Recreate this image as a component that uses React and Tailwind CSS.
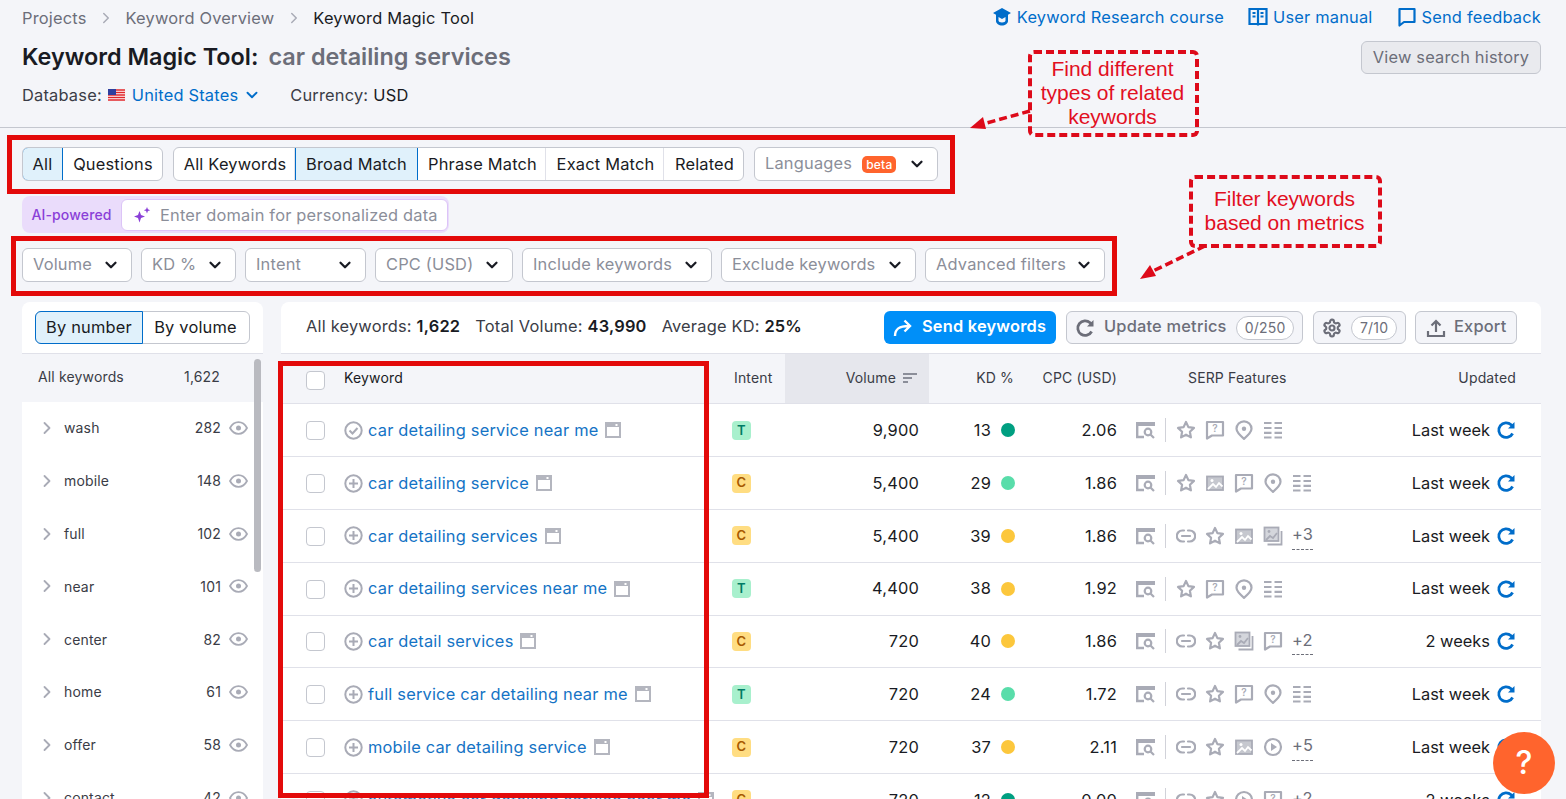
import React from "react";
import { ChevronDown, ChevronRight } from "lucide-react";

const sidebarRows = [
  ["wash", "282"],
  ["mobile", "148"],
  ["full", "102"],
  ["near", "101"],
  ["center", "82"],
  ["home", "61"],
  ["offer", "58"],
  ["contact", "42"],
];

const keywordRows = [
  { kw: "car detailing service near me", done: true, intent: "T", vol: "9,900", kd: "13", dot: "bg-[#009f81]", cpc: "2.06", serp: ["star", "question", "pin", "list"], when: "Last week" },
  { kw: "car detailing service", intent: "C", vol: "5,400", kd: "29", dot: "bg-[#59ddaa]", cpc: "1.86", serp: ["star", "image", "question", "pin", "list"], when: "Last week" },
  { kw: "car detailing services", intent: "C", vol: "5,400", kd: "39", dot: "bg-[#fcc73c]", cpc: "1.86", serp: ["link", "star", "image", "images"], more: "+3", when: "Last week" },
  { kw: "car detailing services near me", intent: "T", vol: "4,400", kd: "38", dot: "bg-[#fcc73c]", cpc: "1.92", serp: ["star", "question", "pin", "list"], when: "Last week" },
  { kw: "car detail services", intent: "C", vol: "720", kd: "40", dot: "bg-[#fcc73c]", cpc: "1.86", serp: ["link", "star", "images", "question"], more: "+2", when: "2 weeks" },
  { kw: "full service car detailing near me", intent: "T", vol: "720", kd: "24", dot: "bg-[#59ddaa]", cpc: "1.72", serp: ["link", "star", "question", "pin", "list"], when: "Last week" },
  { kw: "mobile car detailing service", intent: "C", vol: "720", kd: "37", dot: "bg-[#fcc73c]", cpc: "2.11", serp: ["link", "star", "image", "play"], more: "+5", when: "Last week" },
  { kw: "automotive car detailing service near me", intent: "C", vol: "720", kd: "12", dot: "bg-[#009f81]", cpc: "0.00", serp: ["link", "star", "play", "question"], more: "+2", when: "2 weeks" },
];

const filters = [
  ["Volume", "w-[110px]"],
  ["KD %", "w-[95px]"],
  ["Intent", "w-[121px]"],
  ["CPC (USD)", "w-[138px]"],
  ["Include keywords", "w-[190px]"],
  ["Exclude keywords", "w-[195px]"],
  ["Advanced filters", "w-[180px]"],
];

const matchTabs = [
  ["All Keywords", "w-[121px]", false],
  ["Broad Match", "w-[123px]", true],
  ["Phrase Match", "w-[128px]", false],
  ["Exact Match", "w-[118px]", false],
  ["Related", "w-[79px]", false],
];

function Svg({ size = 20, className = "", children }) {
  return (
    <svg width={size} height={size} viewBox="0 0 20 20" fill="none" className={className}>
      {children}
    </svg>
  );
}

function SerpIcon({ name }) {
  const stroke = { stroke: "#a9abb6", strokeWidth: 2.2 };
  if (name === "star")
    return <Svg><path d="M10 2l2.400 5.100 5.600.8-4.100 3.900 1 5.600-4.900-2.700-4.900 2.700 1-5.600L2 7.900l5.600-.8z" {...stroke} strokeLinejoin="round" /></Svg>;
  if (name === "question")
    return (
      <Svg>
        <path d="M2 2h16v13.500H7l-5 3z" {...stroke} strokeLinejoin="round" />
        <text x="10" y="12" textAnchor="middle" fontSize="10" fontFamily="Inter" fontWeight="600" fill="#a9abb6">?</text>
      </Svg>
    );
  if (name === "pin")
    return (
      <Svg>
        <path d="M10 18.800c-4.500-3.800-7.500-6.800-7.500-10a7.500 7.500 0 0 1 15 0c0 3.200-3 6.200-7.500 10z" {...stroke} />
        <circle cx="10" cy="8.800" r="2.200" fill="#a9abb6" />
      </Svg>
    );
  if (name === "list")
    return <Svg><path d="M1 3h7.500M11.500 3h7.500M1 8h7.500M11.500 8h7.500M1 12.800h7.500M11.500 12.800h7.500M1 17.500h7.500M11.500 17.500h7.500" {...stroke} /></Svg>;
  if (name === "image")
    return (
      <Svg>
        <rect x="2" y="3.500" width="16" height="13.500" fill="#c6c8cf" stroke="#a9abb6" strokeWidth="1.800" />
        <path d="M3 16l5-5 3 3 3-4 3.500 3.500" stroke="#fff" strokeWidth="1.800" />
        <circle cx="7" cy="7.500" r="1.500" fill="#fff" />
      </Svg>
    );
  if (name === "images")
    return (
      <Svg>
        <rect x="1.500" y="1.500" width="14" height="13.500" fill="#d4d6dc" stroke="#a9abb6" strokeWidth="1.800" />
        <path d="M3 14l4-4 3 2 4-5" stroke="#a9abb6" strokeWidth="1.800" />
        <circle cx="6" cy="5.500" r="1.400" fill="#a9abb6" />
        <path d="M18.500 5v13.500h-14" stroke="#a9abb6" strokeWidth="1.800" />
      </Svg>
    );
  if (name === "link")
    return <Svg><path d="M8 4.500H6.300a5.500 5.500 0 0 0 0 11H8M12 4.500h1.700a5.500 5.500 0 0 1 0 11H12M6 10h8" {...stroke} strokeLinecap="round" /></Svg>;
  if (name === "play")
    return (
      <Svg>
        <circle cx="10" cy="10" r="8" {...stroke} />
        <path d="M8 6l6 4-6 4z" fill="#a9abb6" />
      </Svg>
    );
  return null;
}

function SiteIcon() {
  return (
    <Svg className="shrink-0">
      <rect x="1" y="2" width="19" height="4" fill="#a9abb6" />
      <path d="M2.200 5v12H9" stroke="#a9abb6" strokeWidth="2.400" />
      <circle cx="13" cy="12" r="3.300" stroke="#a9abb6" strokeWidth="2.200" />
      <path d="M15.500 14.500l3.500 3.500" stroke="#a9abb6" strokeWidth="2.200" />
    </Svg>
  );
}

function Refresh({ color = "#006dca", size = 20 }) {
  return (
    <Svg size={size} className="shrink-0">
      <path d="M16.600 13.500a7.300 7.300 0 1 1-1.500-8.700l2 2" stroke={color} strokeWidth="2.800" fill="none" />
      <path d="M18.500 2v6.500H12z" fill={color} />
    </Svg>
  );
}

function PageIcon() {
  return (
    <svg width="16" height="16" viewBox="0 0 16 16" className="shrink-0">
      <rect x="1" y="1" width="14" height="14" fill="#fff" stroke="#b4b6bf" strokeWidth="2" />
      <rect x="1" y="1" width="14" height="4" fill="#b4b6bf" />
      <rect x="10.500" y="2" width="2" height="2" fill="#fff" />
    </svg>
  );
}

function Eye() {
  return (
    <svg width="19" height="14" viewBox="0 0 19 14" fill="none" className="shrink-0">
      <path d="M1 7c2-3.700 5-5.800 8.500-5.800S16 3.300 18 7c-2 3.700-5 5.800-8.500 5.800S3 10.700 1 7z" stroke="#a9abb6" strokeWidth="1.800" />
      <circle cx="9.500" cy="7" r="2.500" fill="#a9abb6" />
    </svg>
  );
}

function Checkbox({ className = "" }) {
  return <div className={`h-[19px] w-[19px] shrink-0 rounded-[4px] border border-[#c4c7cf] bg-white ${className}`} />;
}

function Flag() {
  return (
    <svg width="17" height="12" viewBox="0 0 17 12" className="shrink-0">
      <rect width="17" height="12" fill="#fff" />
      <path d="M0 1h17M0 3.500h17M0 6h17M0 8.500h17M0 11h17" stroke="#e0262b" strokeWidth="1.400" />
      <rect width="8" height="6" fill="#2f3f9e" />
    </svg>
  );
}

function FilterButton({ label, width }) {
  return (
    <div className={`flex h-[34px] ${width} items-center justify-between rounded-[6px] border border-[#c4c7cf] bg-white pl-[10px] pr-[11px] text-[#8b8e99]`}>
      <span className="-mt-px">{label}</span>
      <ChevronDown size={18} strokeWidth={3} className="text-[#191b23]" />
    </div>
  );
}

function Callout({ className, children }) {
  return (
    <div className={`absolute flex items-center justify-center rounded-[6px] border-[4px] border-dashed border-[#dd0a1a] pb-[2px] pr-[2px] text-center font-['Liberation_Sans',sans-serif] text-[21px] leading-[24px] tracking-normal text-[#e20f1f] ${className}`}>
      {children}
    </div>
  );
}

export default function App() {
  return (
    <div className="relative h-[799px] w-full overflow-hidden bg-[#f4f5f9] font-['Inter',sans-serif] text-[16.4px] tracking-[0.2px] text-[#191b23]">
      {/* page header */}
      <header className="flex h-[128px] justify-between border-b border-[#c4c7cf] pl-[22px] pr-[25px]">
        <div>
          <nav className="flex h-[36px] items-center text-[#6c6e79]">
            <span>Projects</span>
            <ChevronRight size={18} className="mx-[10.5px] text-[#a9abb6]" />
            <span>Keyword Overview</span>
            <ChevronRight size={18} className="mx-[10.5px] text-[#a9abb6]" />
            <span className="text-[#191b23]">Keyword Magic Tool</span>
          </nav>
          <h1 className="mt-[5px] flex h-[32px] items-center text-[23.4px] font-semibold tracking-normal">
            Keyword Magic Tool:
            <span className="ml-[10px] text-[#6c6e79]">car detailing services</span>
          </h1>
          <div className="mt-[9px] flex h-[26px] items-center text-[#3a3c46]">
            <span>Database:</span>
            <span className="ml-[6px]"><Flag /></span>
            <span className="ml-[7px] text-[#006dca]">United States</span>
            <ChevronDown size={18} strokeWidth={2.5} className="ml-[5px] text-[#006dca]" />
            <span className="ml-[29px]">Currency:</span>
            <span className="ml-[5px] text-[#191b23]">USD</span>
          </div>
        </div>
        <div className="flex flex-col items-end">
          <div className="flex h-[34px] items-center text-[#006dca]">
            <svg width="20" height="20" viewBox="0 0 20 20" className="mr-[5px]">
              <path d="M10 1L1 6l3 1.800V14c0 2.500 3 4.500 6 4.500s6-2 6-4.500V7.800L19 6z" fill="#006dca" />
              <path d="M6.500 10v3.500c0 1 1.500 2 3.500 2s3.500-1 3.500-2V10L10 12z" fill="#f4f5f9" />
            </svg>
            <span>Keyword Research course</span>
            <svg width="20" height="20" viewBox="0 0 20 20" fill="none" className="ml-[24px] mr-[5px]">
              <path d="M1.500 2h17v15h-17zM10 2v16.500" stroke="#006dca" strokeWidth="2.200" />
              <path d="M4.500 6h3M4.500 9.500h3M12.500 6h3M12.500 9.500h3" stroke="#006dca" strokeWidth="2" />
            </svg>
            <span>User manual</span>
            <svg width="20" height="20" viewBox="0 0 20 20" fill="none" className="ml-[24px] mr-[5px]">
              <path d="M2.500 2h15v13H7l-4.500 3.500z" stroke="#006dca" strokeWidth="2.200" strokeLinejoin="round" />
            </svg>
            <span>Send feedback</span>
          </div>
          <div className="mt-[7px] flex h-[33px] w-[180px] items-center justify-center rounded-[6px] border border-[#c4c7cf] bg-[#e9eaee] text-[#6c6e79]">
            View search history
          </div>
        </div>
      </header>

      <div className="px-[22px]">
        {/* match type tabs */}
        <div className="mt-[19px] flex h-[34px]">
          <div className="flex h-full w-[141px] overflow-hidden rounded-[6px] border border-[#c4c7cf] bg-white">
            <div className="-m-px flex w-[41px] items-center justify-center rounded-l-[6px] border border-[#006dca] bg-[#e0f1fb]">All</div>
            <div className="flex flex-1 items-center justify-center pl-[2px]">Questions</div>
          </div>
          <div className="ml-[10px] flex h-full overflow-hidden rounded-[6px] border border-[#c4c7cf] bg-white">
            {matchTabs.map(([label, width, active]) => (
              <div
                key={label}
                className={`flex ${width} items-center justify-center ${active ? "-my-px border border-[#006dca] bg-[#e0f1fb]" : "border-r border-[#e0e1e9] pl-[2px] last:border-r-0"}`}
              >
                {label}
              </div>
            ))}
          </div>
          <div className="ml-[10px] flex h-full w-[184px] items-center rounded-[6px] border border-[#c4c7cf] bg-white pl-[10px] pr-[11px] text-[#8b8e99]">
            <span className="-mt-px">Languages</span>
            <span className="ml-[10px] rounded-[5px] bg-[#ff642d] px-[4px] text-[12px] font-medium leading-[17px] text-white">beta</span>
            <ChevronDown size={18} strokeWidth={3} className="ml-auto text-[#191b23]" />
          </div>
        </div>

        {/* AI domain input */}
        <div className="mt-[15px] flex h-[37px] w-[427px] items-center rounded-[8px] bg-[#eadcfb] pr-px">
          <span className="w-[99px] text-center text-[14px] font-medium tracking-[0.15px] text-[#8a3fd8]">AI-powered</span>
          <div className="flex h-[32px] flex-1 items-center rounded-[6px] border border-[#dcc4f7] bg-white pl-[10px] pt-px text-[#8b8e99]">
            <svg width="20" height="20" viewBox="0 0 20 20" className="mr-[8px] shrink-0">
              <path d="M7.500 6l1.500 4 4 1.500-4 1.500-1.500 4.500L6 13l-4-1.500L6 10z" fill="#8a3fd8" />
              <path d="M15 2l.9 2.300 2.300.9-2.300.9L15 8.500l-.9-2.400-2.300-.9 2.300-.9z" fill="#8a3fd8" />
            </svg>
            Enter domain for personalized data
          </div>
        </div>

        {/* metric filters */}
        <div className="mt-[15px] flex gap-[9px]">
          {filters.map(([label, width]) => (
            <FilterButton key={label} label={label} width={width} />
          ))}
        </div>

        <div className="mt-[20px] flex gap-[18px]">
          {/* keyword groups */}
          <aside className="h-[600px] w-[241px] shrink-0 rounded-t-[8px] bg-white">
            <div className="flex h-[52px] items-center border-b border-[#e0e1e9] pl-[13px]">
              <div className="flex h-[33px] w-[215px] rounded-[6px] border border-[#c4c7cf]">
                <div className="-m-px flex w-[108px] items-center justify-center rounded-l-[6px] border border-[#006dca] bg-[#e0f1fb]">By number</div>
                <div className="flex flex-1 items-center justify-center">By volume</div>
              </div>
            </div>
            <div className="relative">
              <div className="flex h-[47.6px] items-center justify-between bg-[#f4f5f9] pb-[2px] pl-[16px] pr-[43px] text-[14px] tracking-[0.15px] text-[#3a3c46]">
                <span>All keywords</span>
                <span>1,622</span>
              </div>
              {sidebarRows.map(([name, count]) => (
                <div key={name} className="flex h-[52.8px] items-center pl-[15px] pr-[15px] text-[14px] tracking-[0.15px] text-[#3a3c46]">
                  <ChevronRight size={20} strokeWidth={2.2} className="text-[#a9abb6]" />
                  <span className="ml-[7px]">{name}</span>
                  <span className="ml-auto mr-[8px]">{count}</span>
                  <Eye />
                </div>
              ))}
              <div className="absolute right-[2px] top-[5px] h-[213px] w-[7px] rounded-full bg-[#b9bac0]" />
            </div>
          </aside>

          {/* results table */}
          <main className="h-[600px] w-[1260px] shrink-0 rounded-t-[8px] bg-white">
            <div className="flex h-[52px] items-center border-b border-[#e0e1e9] pl-[25px] pr-[24px]">
              <span className="-mt-[2px] text-[#3a3c46]">All keywords: <b className="font-semibold text-[#191b23]">1,622</b></span>
              <span className="-mt-[2px] ml-[15px] text-[#3a3c46]">Total Volume: <b className="font-semibold text-[#191b23]">43,990</b></span>
              <span className="-mt-[2px] ml-[15px] text-[#3a3c46]">Average KD: <b className="font-semibold text-[#191b23]">25%</b></span>
              <div className="ml-auto flex h-[33px] w-[172px] items-center rounded-[6px] bg-[#008ff8] pl-[8px] font-semibold text-white">
                <svg width="22" height="22" viewBox="0 0 22 22" fill="none" className="mr-[8px]">
                  <path d="M3 19c0-7 4-10 14-10M12.500 3.500L18 9l-5.500 5.500" stroke="#fff" strokeWidth="2.400" />
                </svg>
                <span className="-mt-[2px]">Send keywords</span>
              </div>
              <div className="ml-[10px] flex h-[33px] w-[237px] items-center rounded-[6px] border border-[#c4c7cf] bg-[#f4f5f9] pl-[8px] font-medium text-[#6c6e79]">
                <Refresh color="#6c6e79" />
                <span className="-mt-[2px] ml-[9px]">Update metrics</span>
                <span className="ml-[9px] rounded-full border border-[#c4c7cf] bg-white px-[8px] text-[14px] font-normal leading-[22px]">0/250</span>
              </div>
              <div className="ml-[10px] flex h-[33px] w-[93px] items-center rounded-[6px] border border-[#c4c7cf] bg-[#f4f5f9] pl-[8px] text-[#6c6e79]">
                <svg width="20" height="20" viewBox="0 0 24 24" fill="none" stroke="#6c6e79" strokeWidth="2.600">
                  <path d="M12.220 2h-.44a2 2 0 0 0-2 2v.18a2 2 0 0 1-1 1.730l-.43.25a2 2 0 0 1-2 0l-.15-.08a2 2 0 0 0-2.730.73l-.22.38a2 2 0 0 0 .73 2.730l.15.1a2 2 0 0 1 1 1.720v.51a2 2 0 0 1-1 1.740l-.15.09a2 2 0 0 0-.73 2.730l.22.38a2 2 0 0 0 2.730.73l.15-.08a2 2 0 0 1 2 0l.43.25a2 2 0 0 1 1 1.730V20a2 2 0 0 0 2 2h.44a2 2 0 0 0 2-2v-.18a2 2 0 0 1 1-1.730l.43-.25a2 2 0 0 1 2 0l.15.08a2 2 0 0 0 2.730-.73l.22-.39a2 2 0 0 0-.73-2.730l-.15-.08a2 2 0 0 1-1-1.740v-.5a2 2 0 0 1 1-1.740l.15-.09a2 2 0 0 0 .73-2.730l-.22-.38a2 2 0 0 0-2.730-.73l-.15.08a2 2 0 0 1-2 0l-.43-.25a2 2 0 0 1-1-1.730V4a2 2 0 0 0-2-2z" />
                  <circle cx="12" cy="12" r="3" />
                </svg>
                <span className="ml-[9px] rounded-full border border-[#c4c7cf] bg-white px-[8px] text-[14px] leading-[22px]">7/10</span>
              </div>
              <div className="ml-[9px] flex h-[33px] w-[102px] items-center rounded-[6px] border border-[#c4c7cf] bg-[#f4f5f9] pl-[10px] font-medium text-[#6c6e79]">
                <svg width="20" height="20" viewBox="0 0 20 20" fill="none" stroke="#6c6e79" strokeWidth="2.200">
                  <path d="M2 13v5h16v-5M10 14V3M5.500 7.500L10 3l4.500 4.500" />
                </svg>
                <span className="-mt-[2px] ml-[8px]">Export</span>
              </div>
            </div>

            <div className="flex h-[50.4px] items-center border-b border-[#e0e1e9] bg-[#f4f5f9] text-[14px] tracking-[0.15px] text-[#3a3c46]">
              <div className="flex w-[439px] shrink-0 items-center pl-[25px]">
                <Checkbox className="mt-[4px]" />
                <span className="ml-[19px] -mt-[3px] text-[#191b23]">Keyword</span>
              </div>
              <div className="-mt-[2px] w-[65px] shrink-0 pl-[14px]">Intent</div>
              <div className="flex h-full w-[144px] shrink-0 items-center justify-end bg-[#e6e7ed] pb-[2px] pr-[11px]">
                Volume
                <svg width="16" height="12" viewBox="0 0 16 12" className="ml-[6px]" stroke="#8b8e99" strokeWidth="2">
                  <path d="M1 2h14M1 6h9M1 10h5" />
                </svg>
              </div>
              <div className="-mt-[2px] w-[85px] shrink-0 text-right">KD %</div>
              <div className="-mt-[2px] w-[103px] shrink-0 text-right">CPC (USD)</div>
              <div className="-mt-[2px] ml-[71px] w-[104px] shrink-0 whitespace-nowrap">SERP Features</div>
              <div className="-mt-[2px] flex-1 pr-[25px] text-right">Updated</div>
            </div>

            {keywordRows.map((row) => (
              <div key={row.kw} className="flex h-[52.8px] items-center border-b border-[#e0e1e9]">
                <div className="flex w-[439px] shrink-0 items-center pl-[25px]">
                  <Checkbox className="mt-px" />
                  <svg width="19" height="19" viewBox="0 0 19 19" fill="none" stroke="#a9abb6" strokeWidth="2" className="ml-[19px] shrink-0">
                    <circle cx="9.500" cy="9.500" r="8.200" />
                    {row.done ? <path d="M5.500 9.500l3 3 5-5.500" /> : <path d="M9.500 5v9M5 9.500h9" />}
                  </svg>
                  <span className="ml-[5px] text-[#1473c5]">{row.kw}</span>
                  <span className="ml-[7px]"><PageIcon /></span>
                </div>
                <div className="w-[65px] shrink-0 pl-[12px]">
                  <span
                    className={`flex h-[19px] w-[19px] items-center justify-center rounded-[4px] text-[13px] font-semibold ${
                      row.intent === "T" ? "bg-[#a8f0cd] text-[#007c65]" : "bg-[#ffdd82] text-[#a75800]"
                    }`}
                  >
                    {row.intent}
                  </span>
                </div>
                <div className="w-[144px] shrink-0 pr-[10px] text-right">{row.vol}</div>
                <div className="flex w-[86px] shrink-0 items-center justify-end">
                  {row.kd}
                  <span className={`ml-[10px] h-[14px] w-[14px] rounded-full ${row.dot}`} />
                </div>
                <div className="w-[102px] shrink-0 text-right">{row.cpc}</div>
                <div className="ml-[18px] flex items-center">
                  <SiteIcon />
                  <div className="ml-[10px] mr-[10px] h-[24px] w-px bg-[#d1d2d9]" />
                  <div className="flex items-center gap-[9px]">
                    {row.serp.map((name, i) => (
                      <SerpIcon key={i} name={name} />
                    ))}
                    {row.more && (
                      <span className="border-b border-dashed border-[#6c6e79] pb-[2px] text-[#6c6e79]">{row.more}</span>
                    )}
                  </div>
                </div>
                <div className="ml-auto flex items-center pr-[25px] tracking-normal">
                  {row.when}
                  <span className="ml-[6px]"><Refresh /></span>
                </div>
              </div>
            ))}
          </main>
        </div>
      </div>

      {/* tutorial annotations drawn over the screenshot */}
      <div className="absolute left-[7px] top-[135px] h-[59px] w-[948px] border-[5px] border-[#e30a0a]" />
      <div className="absolute left-[11px] top-[236px] h-[60px] w-[1106px] border-[5px] border-[#e30a0a]" />
      <div className="absolute left-[278px] top-[361px] h-[437px] w-[431px] border-[5px] border-[#e30a0a]" />
      <Callout className="left-[1028px] top-[50px] h-[87px] w-[171px]">
        Find different<br />types of related<br />keywords
      </Callout>
      <Callout className="left-[1189px] top-[175px] h-[73px] w-[193px]">
        Filter keywords<br />based on metrics
      </Callout>
      <svg className="absolute left-[965px] top-[105px]" width="70" height="30" viewBox="0 0 70 30" fill="none">
        <path d="M65 6L18 19" stroke="#dd0a1a" strokeWidth="3.500" strokeDasharray="8 4" />
        <path d="M5 23l13-11 3 12z" fill="#dd0a1a" />
      </svg>
      <svg className="absolute left-[1135px] top-[243px]" width="75" height="40" viewBox="0 0 75 40" fill="none">
        <path d="M70 3L18 28" stroke="#dd0a1a" strokeWidth="3.500" strokeDasharray="8 4" />
        <path d="M5 36l10-14 6 11z" fill="#dd0a1a" />
      </svg>

      {/* help bubble */}
      <div className="absolute left-[1493px] top-[732px] flex h-[62px] w-[62px] items-center justify-center rounded-full bg-[#ff642d] text-[32px] font-medium text-white">
        ?
      </div>
    </div>
  );
}
